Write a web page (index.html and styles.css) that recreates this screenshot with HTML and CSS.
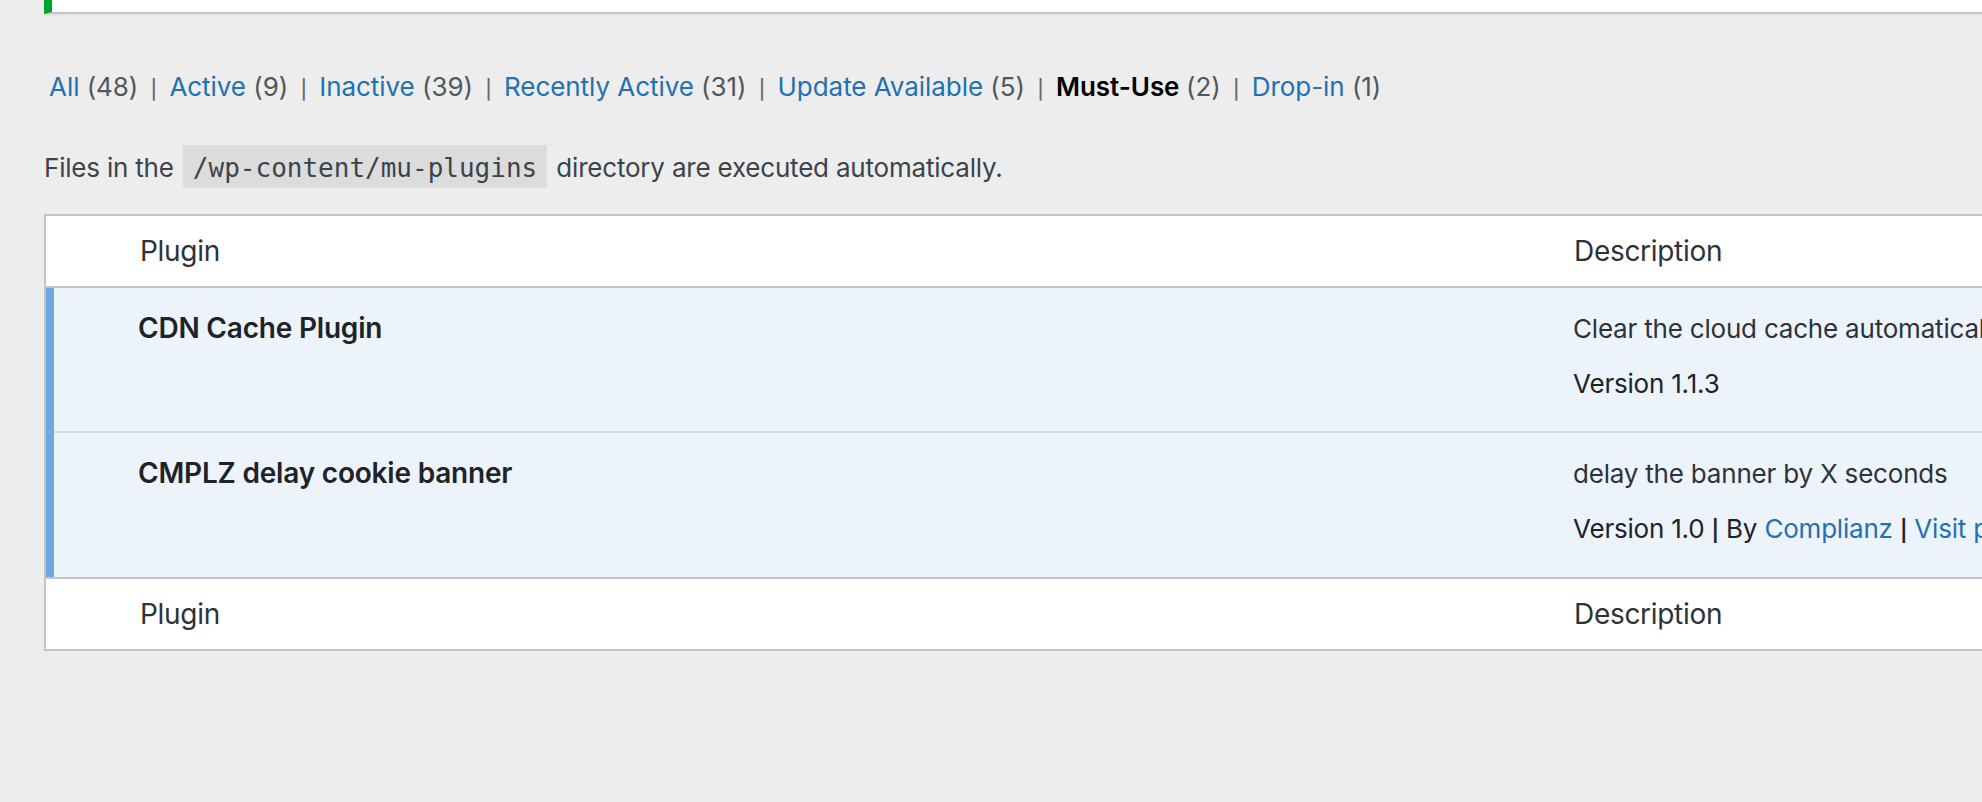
FILE: index.html
```html
<!DOCTYPE html>
<html lang="en">
<head>
<meta charset="utf-8">
<title>Plugins – Must-Use</title>
<link rel="stylesheet" href="styles.css">
</head>
<body>
<div class="wrap">
  <div class="notice notice-success"></div>
  <ul class="subsubsub">
    <li><a href="#">All <span class="count">(48)</span></a> <span class="sep">|</span></li>
    <li><a href="#">Active <span class="count">(9)</span></a> <span class="sep">|</span></li>
    <li><a href="#">Inactive <span class="count">(39)</span></a> <span class="sep">|</span></li>
    <li><a href="#">Recently Active <span class="count">(31)</span></a> <span class="sep">|</span></li>
    <li><a href="#">Update Available <span class="count">(5)</span></a> <span class="sep">|</span></li>
    <li><a href="#" class="current">Must-Use <span class="count">(2)</span></a> <span class="sep">|</span></li>
    <li><a href="#">Drop-in <span class="count">(1)</span></a></li>
  </ul>
  <p class="mu-info">Files in the <code>/wp-content/mu-plugins</code> directory are executed automatically.</p>
  <table class="plugins">
    <thead>
      <tr>
        <td class="check-column"></td>
        <th class="column-name">Plugin</th>
        <th class="column-description">Description</th>
      </tr>
    </thead>
    <tbody>
      <tr class="active">
        <th class="check-column"></th>
        <td class="plugin-title"><strong>CDN Cache Plugin</strong></td>
        <td class="desc">
          <p>Clear the cloud cache automatically when content is updated.</p>
          <div class="second">Version 1.1.3</div>
        </td>
      </tr>
      <tr class="active">
        <th class="check-column"></th>
        <td class="plugin-title"><strong>CMPLZ delay cookie banner</strong></td>
        <td class="desc">
          <p>delay the banner by X seconds</p>
          <div class="second">Version 1.0 <span class="vsep">|</span> By <a href="#">Complianz</a> <span class="vsep">|</span> <a href="#">Visit plugin site</a></div>
        </td>
      </tr>
    </tbody>
    <tfoot>
      <tr>
        <td class="check-column"></td>
        <th class="column-name">Plugin</th>
        <th class="column-description">Description</th>
      </tr>
    </tfoot>
  </table>
</div>
</body>
</html>
```
FILE: styles.css
```css
html, body {
  margin: 0;
  padding: 0;
}
body {
  background: #ededed;
  overflow: hidden;
  font-family: Inter, "Noto Sans", sans-serif;
  font-size: 26px;
  color: #3c434a;
}
.wrap {
  padding-left: 44px;
}
.notice {
  height: 12px;
  background: #fff;
  border-left: 8px solid #00a32a;
  border-bottom: 2px solid #c3c4c7;
  box-shadow: 0 2px 2px rgba(0, 0, 0, 0.04);
}
.subsubsub {
  list-style: none;
  margin: 47px 0 0;
  padding: 0;
  line-height: 52px;
  white-space: nowrap;
  color: #646970;
  letter-spacing: -0.05px;
}
.subsubsub li {
  display: inline;
}
.subsubsub a {
  padding: 0 5px;
  color: #2271b1;
  text-decoration: none;
}
.subsubsub .count {
  color: #50575e;
  font-weight: 400;
}
.subsubsub a.current {
  color: #000;
  font-weight: 600;
}
.subsubsub .sep {
  font-size: 19px;
  line-height: 1;
  font-weight: 500;
  color: #646970;
}
.mu-info {
  margin: 35px 0 0;
  line-height: 39px;
  color: #3c434a;
  letter-spacing: -0.2px;
}
.mu-info code {
  font-family: "DejaVu Sans Mono", monospace;
  font-size: 26px;
  letter-spacing: 0;
  background: rgba(0, 0, 0, 0.07);
  padding: 8px 10px 5px;
  margin: 0 2px;
  color: #3c434a;
}
.plugins {
  margin-top: 26px;
  width: 2400px;
  table-layout: fixed;
  border-collapse: separate;
  border-spacing: 0;
  background: #fff;
  border: 2px solid #c3c4c7;
  border-right: none;
}
.plugins th,
.plugins td {
  box-sizing: border-box;
  text-align: left;
  vertical-align: top;
}
.plugins thead th,
.plugins thead td,
.plugins tfoot th,
.plugins tfoot td {
  padding: 16px 20px 16px 22px;
  font-size: 28px;
  line-height: 38px;
  font-weight: 400;
  color: #2c3338;
  letter-spacing: -0.3px;
}
.plugins thead .column-description,
.plugins tfoot .column-description {
  padding-left: 21px;
}
.plugins thead th,
.plugins thead td {
  border-bottom: 2px solid #c3c4c7;
}
.plugins tfoot th,
.plugins tfoot td {
  border-top: 2px solid #c3c4c7;
}
.plugins .check-column {
  width: 72px;
  padding: 0;
}
.plugins .column-name {
  width: 1435px;
}
.plugins tbody tr.active > * {
  background: #edf3fb;
  box-shadow: inset 0 -2px 0 rgba(0, 0, 0, 0.1);
  padding: 21px 20px 19.5px;
}
.plugins tbody tr:last-child > * {
  box-shadow: none;
}
.plugins tbody th.check-column {
  padding: 0;
  border-left: 8px solid #6fa8e0;
}
.plugins thead .check-column,
.plugins tfoot .check-column {
  padding: 0;
}
.plugin-title {
  font-size: 28px;
  line-height: 39px;
  white-space: nowrap;
  letter-spacing: -0.2px;
}
.plugin-title strong {
  font-weight: 600;
  color: #1d2327;
}
.desc {
  font-size: 26px;
  line-height: 39px;
  white-space: nowrap;
  letter-spacing: -0.2px;
}
.desc p {
  margin: 0 0 16px;
  color: #2c3338;
}
.desc .second {
  padding-bottom: 10px;
  color: #1d2327;
}
.desc .vsep {
  font-size: 21px;
  line-height: 1;
  font-weight: 600;
}
.desc a {
  color: #2271b1;
  text-decoration: none;
}
```
